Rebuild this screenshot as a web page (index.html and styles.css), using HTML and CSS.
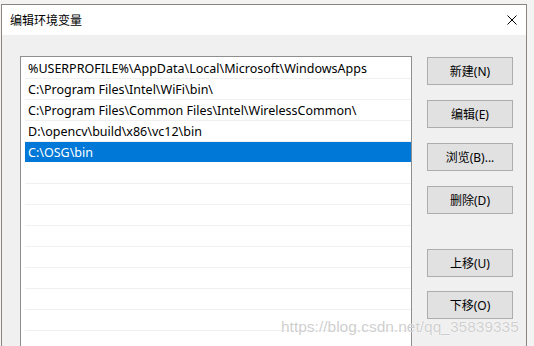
FILE: index.html
```html
<!DOCTYPE html>
<html lang="zh">
<head>
    <meta charset="UTF-8">
    <title>编辑环境变量</title>
    <link rel="stylesheet" href="styles.css">
</head>
<body>
    <div class="dialog">
        <div class="titlebar">
            <span class="title">编辑环境变量</span>
            <span class="close">
                <svg width="10" height="10" viewBox="0 0 10 10"><path d="M0.5 0.5L9.5 9.5M9.5 0.5L0.5 9.5" stroke="#000" stroke-width="1"/></svg>
            </span>
        </div>
        <div class="content">
            <div class="pathlist">
                <div class="row">%USERPROFILE%\AppData\Local\Microsoft\WindowsApps</div>
                <div class="row">C:\Program Files\Intel\WiFi\bin\</div>
                <div class="row">C:\Program Files\Common Files\Intel\WirelessCommon\</div>
                <div class="row">D:\opencv\build\x86\vc12\bin</div>
                <div class="row selected">C:\OSG\bin</div>
                <div class="row"></div>
                <div class="row"></div>
                <div class="row"></div>
                <div class="row"></div>
                <div class="row"></div>
                <div class="row"></div>
                <div class="row"></div>
                <div class="row"></div>
                <div class="row"></div>
            </div>
            <div class="buttons">
                <button>新建(N)</button>
                <button>编辑(E)</button>
                <button>浏览(B)...</button>
                <button>删除(D)</button>
                <button class="move-up">上移(U)</button>
                <button class="move-down">下移(O)</button>
            </div>
        </div>
    </div>
    <div class="watermark">https://blog.csdn.net/qq_35839335</div>
</body>
</html>
```

FILE: styles.css
```css
body {
    margin: 0;
    background-color: #f3f3f3;
    font-family: 'Noto Sans', 'Noto Sans CJK SC', sans-serif;
    font-size: 12px;
    color: #000;
    overflow: hidden;
}
.dialog {
    margin: 4px 0 0 1px;
    width: 524px;
    height: 360px;
    border: 1px solid #8a8580;
    border-bottom: none;
    background-color: #f0f0f0;
}
.titlebar {
    height: 30px;
    background-color: #fff;
    display: flex;
    align-items: center;
    justify-content: space-between;
    padding: 0 9px 0 8px;
}
.title {
    font-family: 'Noto Sans CJK SC', sans-serif;
    font-size: 12px;
    padding-bottom: 1px;
}
.close {
    display: flex;
}
.content {
    display: flex;
    padding: 21px 0 0 18px;
}
.pathlist {
    width: 386px;
    height: 320px;
    border: 1px solid #8f8f8f;
    background-color: #fff;
    padding: 1px 0 0 4px;
}
.row {
    height: 20px;
    line-height: 21px;
    padding-left: 3px;
    border-bottom: 1px solid #f0f0f0;
    white-space: nowrap;
    font-size: 12.5px;
}
.row.selected {
    background-color: #0078d7;
    color: #fff;
    border-bottom-color: #fff;
}
.buttons {
    display: flex;
    flex-direction: column;
    margin-left: 15px;
    padding-top: 1px;
}
.buttons button {
    width: 86px;
    height: 28px;
    margin: 0 0 15px 0;
    padding: 0;
    background-color: #e1e1e1;
    border: 1px solid #adadad;
    font-family: 'Noto Sans', 'Noto Sans CJK SC', sans-serif;
    font-size: 12px;
    color: #000;
}
.buttons .move-up {
    margin-top: 20px;
    margin-bottom: 14px;
}
.watermark {
    position: absolute;
    left: 281px;
    top: 318px;
    font-family: 'Liberation Sans', sans-serif;
    font-size: 15.5px;
    color: rgba(190, 190, 190, 0.75);
    text-shadow: 0 0 1px #fff, 0 0 1px #fff;
}
```
